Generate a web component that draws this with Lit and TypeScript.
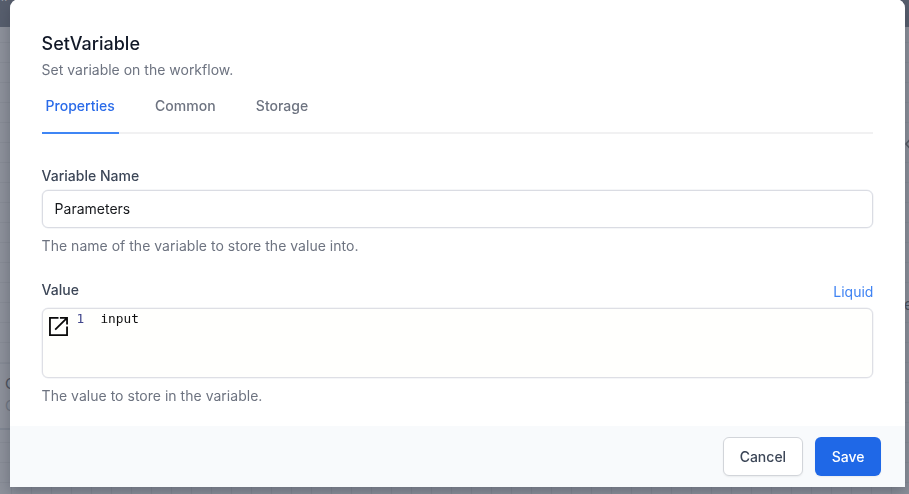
import { LitElement, html, css, svg } from "lit";
import { customElement, property, state } from "lit/decorators.js";
import { classMap } from "lit/directives/class-map.js";

@customElement("canvas-backdrop")
class CanvasBackdrop extends LitElement {
  static styles = css`
    :host { display: block; position: absolute; inset: 0; overflow: hidden;
      background: #8d919b; font-family: Inter, sans-serif; }
    .grid { position: absolute; inset: 0;
      background-image: linear-gradient(#878b95 1px, transparent 1px),
        linear-gradient(90deg, #858993 1px, transparent 1px);
      background-size: 20px 20px; background-position: 0 2px, 11px 0; }
    .bar { position: absolute; left: 0; right: 0; top: 0; height: 27px; background: #575e6d; }
    .node { position: absolute; left: -20px; top: 363px; width: 60px; height: 67px;
      background: #8d919b; border-top: 1px solid #858a95; border-bottom: 2px solid #808692; box-sizing: border-box; }
    .t { position: absolute; font-size: 15px; line-height: 20px; color: #4b505b; }
    .a { left: 5px; top: 374px; }
    .b { left: 5px; top: 396px; color: #707682; font-size: 14px; }
    .e { left: 904px; top: 295px; }
    .code { position: absolute; left: 904px; top: 138px; }
    .menu { position: absolute; left: 0; top: -9px; font-size: 10px; line-height: 12px; color: #9da1aa; }
  `;
  render() {
    return html`<div class="grid"></div><div class="bar"></div><div class="node"></div>
      <span class="menu">w</span><span class="t a">C</span><span class="t b">C</span><span class="t e">e</span>
      <svg class="code" width="8" height="12"><path d="M5.5 2L2 6L5.5 10" fill="none" stroke="#535862" stroke-width="1.5"/></svg>`;
  }
}

@customElement("tab-bar")
class TabBar extends LitElement {
  @property({ type: Array }) tabs: string[] = [];
  @state() private active = 0;
  static styles = css`
    :host { display: flex; gap: 32.3px; height: 39px; box-sizing: border-box; border-bottom: 2px solid #f1f1f2; }
    button { all: unset; box-sizing: border-box; height: 39px; padding: 0 4px 18px;
      font: 500 14px/21px Inter, sans-serif; color: #6d7380;
      border-bottom: 2px solid transparent; cursor: pointer; white-space: nowrap; }
    .active { color: #2a6be9; border-color: #3f86f5; }
  `;
  render() {
    return this.tabs.map((t, i) => html`<button class=${classMap({ active: i === this.active })}
      @click=${() => (this.active = i)}>${t}</button>`);
  }
}

@customElement("app-root")
class AppRoot extends LitElement {
  static styles = css`
    :host { display: block; position: relative; width: 100%; height: 494px; overflow: hidden;
      font: 400 14px/20px Inter, sans-serif; color: #6d7380; }
    * { box-sizing: border-box; }
    .modal { position: relative; display: flex; flex-direction: column; margin: -1px 3.6px 0 9.5px; height: 488px;
      background: #fff; border-radius: 9px 9px 0 0; overflow: hidden; }
    .shade { position: relative; filter: drop-shadow(0 0 .5px rgba(220,222,228,.6)) drop-shadow(0 5px 7px rgba(40,45,60,.35)); }
    .body { display: flex; flex-direction: column; height: 427px; padding: 32px 32px 0 32.1px; }
    h1 { margin: 0; font-size: 18px; line-height: 26px; font-weight: 500; color: #111827; }
    .sub { margin: 2px 0 0; height: 22px; line-height: 22px; font-size: 14px; }
    tab-bar { margin-top: 14px; }
    label { display: block; color: #3c4657; font-weight: 500; }
    .name { margin-top: 32px; }
    input { display: block; width: 100%; height: 38px; margin-top: 4px; padding: 0 12px 2px; border: 1px solid #dadce3;
      border-radius: 6px; font: 400 14px Inter, sans-serif; color: #17191d; outline: 0; box-shadow: 0 0 0 .5px #eceef2; }
    .help { margin: 8px 0 0; line-height: 20px; letter-spacing: .02px; }
    .valuehead { display: flex; justify-content: space-between; margin-top: 24px; }
    .liquid { color: #3f83f3; padding-top: 2px; }
    .editor { display: flex; height: 70px; margin-top: 5.5px; padding: 0 6.5px; border: 1px solid #dedfe5;
      border-radius: 6px; background: #fffffd; box-shadow: 0 0 0 .5px #eceef2; }
    .editor + .help { margin-top: 8.5px; }
    .open { margin-top: 8px; width: 19px; height: 19px; flex: none; }
    .line { font: 12.8px/19px "DejaVu Sans Mono", monospace; color: #111; white-space: pre; }
    .no { color: #40458b; width: 24px; margin-left: 8.3px; }
    footer { display: flex; justify-content: flex-end; gap: 12px; flex: 1; padding: 11px 24px 0; background: #f8fafc; }
    .btn { height: 38.5px; padding: 1px 0 0; border-radius: 6px; font: 500 14px/20px Inter, sans-serif;
      box-shadow: 0 1px 2px rgba(0,0,0,.06); }
    .cancel { width: 80px; color: #3c4657; background: #fff; border: 1px solid #d2d5da; }
    .save { width: 66.5px; color: #fff; background: #1f68e7; border: 0; }
  `;
  private icon = svg`<path d="M10 1H1V19H19V10M11.5 1H19V8M18.5 1.5L6.5 13.3" fill="none" stroke="#090909" stroke-width="1.9"/>`;
  render() {
    return html`<canvas-backdrop></canvas-backdrop>
      <div class="shade"><div class="modal">
        <div class="body">
          <h1>SetVariable</h1>
          <p class="sub">Set variable on the workflow.</p>
          <tab-bar .tabs=${["Properties", "Common", "Storage"]}></tab-bar>
          <label class="name">Variable Name</label>
          <input .value=${"Parameters"} />
          <p class="help">The name of the variable to store the value into.</p>
          <div class="valuehead"><label>Value</label><span class="liquid">Liquid</span></div>
          <div class="editor"><svg class="open" viewBox="0 0 20 20">${this.icon}</svg>
            <span class="line no">1</span><span class="line">input</span></div>
          <p class="help">The value to store in the variable.</p>
        </div>
        <footer><button class="btn cancel">Cancel</button><button class="btn save">Save</button></footer>
      </div></div>`;
  }
}
